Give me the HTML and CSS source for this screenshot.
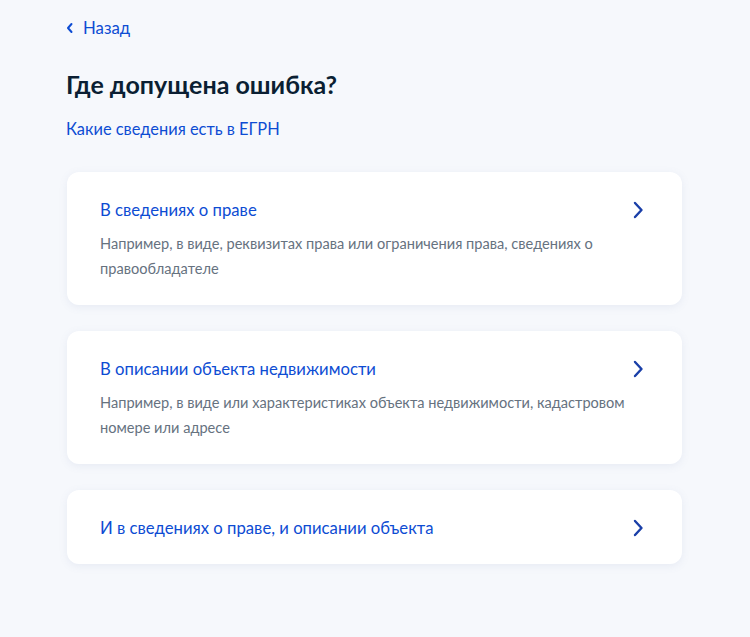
FILE: index.html
```html
<!DOCTYPE html>
<html lang="ru">
<head>
<meta charset="utf-8">
<link rel="stylesheet" href="styles.css">
</head>
<body>
<div class="page">
  <a class="back" href="#">
    <svg class="back-icon" width="8" height="12" viewBox="0 0 8 12"><path d="M5.5 2 L2 6 L5.5 10" fill="none" stroke="#0d4cd3" stroke-width="2" stroke-linecap="round" stroke-linejoin="round"/></svg>
    <span>Назад</span>
  </a>
  <h1 class="title">Где допущена ошибка?</h1>
  <a class="info-link" href="#">Какие сведения есть в ЕГРН</a>
  <div class="cards">
    <div class="card">
      <div class="card-body">
        <div class="card-title">В сведениях о праве</div>
        <div class="card-desc">Например, в виде, реквизитах права или ограничения права, сведениях о правообладателе</div>
      </div>
      <svg class="chev" width="12" height="18" viewBox="0 0 12 18"><path d="M3 2 L9.5 9 L3 16" fill="none" stroke="#1a3fa8" stroke-width="2.4" stroke-linecap="round" stroke-linejoin="round"/></svg>
    </div>
    <div class="card">
      <div class="card-body">
        <div class="card-title">В описании объекта недвижимости</div>
        <div class="card-desc">Например, в виде или характеристиках объекта недвижимости, кадастровом номере или адресе</div>
      </div>
      <svg class="chev" width="12" height="18" viewBox="0 0 12 18"><path d="M3 2 L9.5 9 L3 16" fill="none" stroke="#1a3fa8" stroke-width="2.4" stroke-linecap="round" stroke-linejoin="round"/></svg>
    </div>
    <div class="card">
      <div class="card-body">
        <div class="card-title">И в сведениях о праве, и описании объекта</div>
      </div>
      <svg class="chev" width="12" height="18" viewBox="0 0 12 18"><path d="M3 2 L9.5 9 L3 16" fill="none" stroke="#1a3fa8" stroke-width="2.4" stroke-linecap="round" stroke-linejoin="round"/></svg>
    </div>
  </div>
</div>
</body>
</html>
```

FILE: styles.css
```css
html, body {
  margin: 0;
  padding: 0;
  background: #f6f8fc;
  font-family: Lato, "Noto Sans", sans-serif;
}
.page {
  width: 616px;
  padding: 16px 0 40px 66px;
  box-sizing: content-box;
}
.back {
  display: flex;
  align-items: center;
  gap: 9px;
  color: #0d4cd3;
  text-decoration: none;
  font-size: 16.8px;
  line-height: 24px;
}
.back-icon {
  display: block;
}
.title {
  margin: 28px 0 0;
  font-size: 25px;
  line-height: 32px;
  font-weight: 700;
  color: #0b1f33;
}
.info-link {
  display: block;
  margin-top: 18px;
  font-size: 16.4px;
  line-height: 22px;
  color: #0d4cd3;
  text-decoration: none;
}
.cards {
  margin-top: 32px;
  margin-left: 1px;
  display: flex;
  flex-direction: column;
  gap: 26px;
}
.card {
  background: #fff;
  border-radius: 12px;
  box-shadow: 0 2px 8px rgba(100, 120, 170, 0.10);
  padding: 26px 38px 24px 33px;
  display: flex;
  align-items: flex-start;
  gap: 2px;
}
.card-body {
  flex: 1;
}
.card-title {
  font-size: 16.7px;
  line-height: 24px;
  color: #0d4cd3;
}
.card-desc {
  margin-top: 9px;
  font-size: 14.6px;
  line-height: 25px;
  color: #66727f;
}
.chev {
  display: block;
  margin-top: 3px;
  flex: none;
}
```
